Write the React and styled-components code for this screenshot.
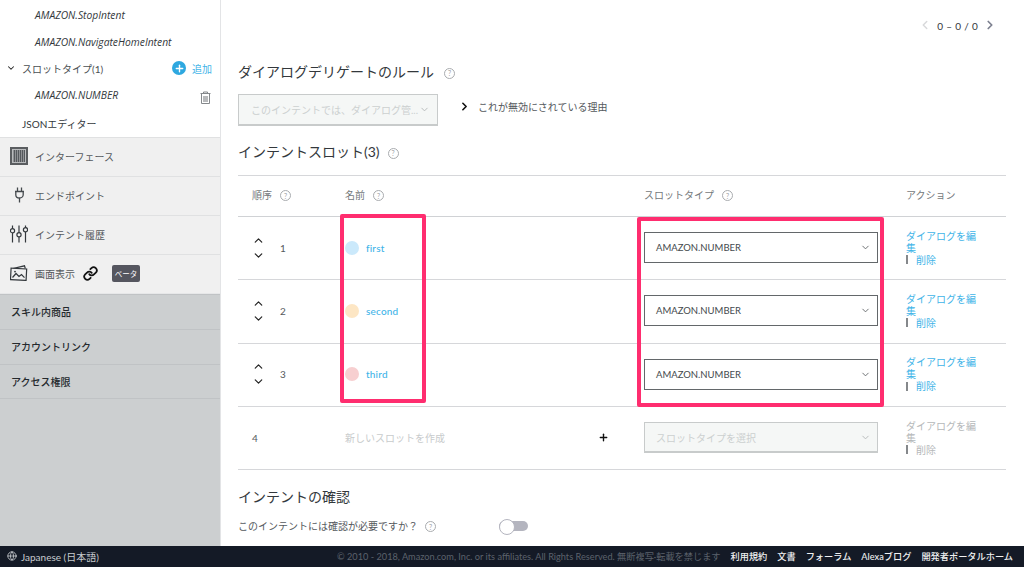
import React from 'react';
import styled, { createGlobalStyle } from 'styled-components';
import { ChevronDown, ChevronUp, ChevronRight, ChevronLeft, Plus, Link, Globe } from 'lucide-react';

const GlobalStyle = createGlobalStyle`
    html, body, #root {
        margin: 0;
        height: 100%;
    }
    body {
        font-family: "Lato", "Noto Sans CJK JP", sans-serif;
        color: #44494d;
        background: #fff;
        overflow: hidden;
    }
    * {
        box-sizing: border-box;
    }
`;

const Page = styled.div`
    width: 1024px;
    height: 567px;
    display: flex;
    flex-direction: column;
`;

const Body = styled.div`
    flex: 1;
    min-height: 0;
    display: flex;
`;

const Sidebar = styled.aside`
    width: 221px;
    flex: none;
    display: flex;
    flex-direction: column;
    background: #cccfd0;
    border-right: 1px solid #e3e4e6;
`;

const TreeBlock = styled.div`
    background: #fff;
    height: 137px;
    padding-top: 2px;
`;

const TreeRow = styled.div`
    height: 26.6px;
    display: flex;
    align-items: center;
    padding-left: ${p => p.$indent}px;
    padding-right: 8px;
    font-size: 10px;
    color: #4a4f53;
`;

const IntentName = styled.span`
    font-family: "Open Sans", sans-serif;
    font-style: italic;
    font-size: 10.3px;
    color: #33383c;
`;

const AddLabel = styled.span`
    display: flex;
    align-items: center;
    gap: 6px;
    margin-left: auto;
    color: #3fb4e8;
    font-size: 10px;
`;

const AddDot = styled.span`
    width: 14px;
    height: 14px;
    border-radius: 50%;
    background: #2ea8e0;
    color: #fff;
    display: flex;
    align-items: center;
    justify-content: center;
`;

const TrashWrap = styled.span`
    margin-left: auto;
    margin-right: 1px;
    display: flex;
    padding-top: 4px;
`;

const JsonRow = styled(TreeRow)`
    margin-top: 2px;
    color: #33383c;
`;

const NavList = styled.div`
    border-bottom: 1px solid #e6e7e8;
`;

const NavItem = styled.div`
    height: 39px;
    padding-bottom: 2px;
    display: flex;
    align-items: center;
    background: #f0f0f0;
    border-top: 1px solid #e0e1e2;
    font-size: 10px;
    color: #55595d;
`;

const NavIcon = styled.span`
    width: 35px;
    padding-left: 10px;
    flex: none;
    display: flex;
    color: #33383c;
`;

const GridIcon = styled.span`
    width: 18px;
    height: 18px;
    border: 2px solid #5a5d60;
    outline: 1px solid #b9bbbd;
    outline-offset: -3px;
    background:
        repeating-linear-gradient(90deg, #55595d 0 1px, #8f9194 1px 2px),
        #777;
`;

const BetaBadge = styled.span`
    margin-left: 14px;
    width: 28px;
    height: 17px;
    border-radius: 2px;
    background: #55565f;
    color: #fff;
    font-size: 7.5px;
    display: flex;
    align-items: center;
    justify-content: center;
`;

const LinkWrap = styled.span`
    margin-left: 8px;
    display: flex;
    color: #111;
`;

const GrayItem = styled.div`
    height: 35px;
    padding: 0 0 1px 11px;
    display: flex;
    align-items: center;
    border-top: 1px solid #c0c3c5;
    font-size: 10px;
    font-weight: 500;
    color: #24292d;
    &:last-of-type {
        border-bottom: 1px solid #c0c3c5;
    }
`;

const Main = styled.main`
    flex: 1;
    min-width: 0;
    padding: 0 18px 0 17px;
    overflow: hidden;
`;

const Pager = styled.div`
    height: 62px;
    padding: 18px 9px 0 0;
    display: flex;
    justify-content: flex-end;
    align-items: flex-start;
    gap: 5px;
    font-size: 10px;
    letter-spacing: 0.3px;
    color: #33383c;
    line-height: 16px;
`;

const Heading = styled.h2`
    margin: 0;
    font-size: 14px;
    font-weight: 400;
    line-height: 20px;
    color: #33383c;
    display: flex;
    align-items: center;
    gap: ${p => p.$gap || 5}px;
`;

const HelpMark = styled.span`
    width: 11px;
    height: 11px;
    flex: none;
    border: 1px solid #a9acaf;
    border-radius: 50%;
    color: #a0a3a6;
    font-size: 7px;
    display: inline-flex;
    align-items: center;
    justify-content: center;
    margin-top: 2px;
`;

const DelegateRow = styled.div`
    margin-top: 12px;
    height: 31px;
    display: flex;
    align-items: center;
`;

const SelectBox = styled.div`
    width: ${p => p.$width}px;
    height: ${p => p.$height || 32}px;
    flex: none;
    padding: 0 ${p => (p.$tight ? 7 : 6)}px 0 ${p => (p.$tight ? 12 : 11)}px;
    display: flex;
    align-items: center;
    justify-content: space-between;
    white-space: nowrap;
    font-size: ${p => (p.$mono ? 9.5 : 10)}px;
    border: 1px solid ${p => (p.$disabled ? '#c8cbcb' : '#63676a')};
    border-bottom-width: ${p => (p.$disabled ? 2 : 1)}px;
    background: ${p => (p.$disabled ? '#f5f7f6' : '#fff')};
    color: ${p => (p.$disabled ? '#ccd0d0' : '#44494d')};
`;

const SelectChevron = styled.span`
    display: flex;
    color: ${p => (p.$disabled ? '#b4b8b8' : '#63676a')};
`;

const Reason = styled.div`
    margin-left: 20px;
    padding-bottom: 6px;
    display: flex;
    align-items: center;
    gap: 7px;
    font-size: 10px;
    color: #55595d;
`;

const SlotHeading = styled(Heading)`
    margin-top: 17px;
`;

const Table = styled.div`
    position: relative;
    margin-top: 13px;
    border-top: 1px solid #d6d7da;
`;

const columns = '107px 299px 262px 1fr';

const HeaderRow = styled.div`
    display: grid;
    grid-template-columns: ${columns};
    height: 41px;
    padding-bottom: 3px;
    align-items: center;
    font-size: 10px;
    color: #74787b;
    border-bottom: 1px solid #d0d2d5;
`;

const HeaderCell = styled.div`
    display: flex;
    align-items: center;
    gap: 8px;
    padding-left: ${p => p.$pad || 0}px;
`;

const SlotRow = styled.div`
    display: grid;
    grid-template-columns: ${columns};
    height: 63.3px;
    padding-bottom: 1px;
    align-items: center;
    font-size: 10px;
    border-bottom: 1px solid #d6d7da;
`;

const OrderCell = styled.div`
    display: flex;
    align-items: center;
    padding-left: 14px;
    gap: 15px;
    color: #55595d;
`;

const Arrows = styled.div`
    width: 13px;
    display: flex;
    flex-direction: column;
    align-items: center;
    gap: 2px;
    color: #222;
`;

const NameCell = styled.div`
    display: flex;
    align-items: center;
    gap: 7px;
`;

const Dot = styled.span`
    width: 14px;
    height: 14px;
    border-radius: 50%;
    background: ${p => p.$color};
`;

const SlotName = styled.span`
    color: #3fb4e8;
    font-size: 10px;
    font-weight: 500;
    letter-spacing: 0.2px;
`;

const NewSlotCell = styled.div`
    display: flex;
    align-items: center;
    justify-content: space-between;
    padding-right: 35px;
    color: #c8cbcc;
`;

const PlusWrap = styled.span`
    display: flex;
    color: #111;
`;

const ActionCell = styled.div`
    width: 74px;
    font-size: 10px;
    line-height: 12px;
    color: ${p => (p.$disabled ? '#b5b8ba' : '#3fb4e8')};
`;

const DeleteLine = styled.div`
    display: flex;
    align-items: center;
`;

const Divider = styled.span`
    width: 2px;
    height: 9px;
    background: #85888b;
    margin-right: 8px;
`;

const Highlight = styled.div`
    position: absolute;
    top: ${p => p.$top}px;
    left: ${p => p.$left}px;
    width: ${p => p.$width}px;
    height: ${p => p.$height}px;
    border: 4px solid #ff2d6f;
    border-radius: 2px;
    pointer-events: none;
`;

const ConfirmHeading = styled(Heading)`
    margin-top: 17px;
`;

const ConfirmRow = styled.div`
    margin-top: 11px;
    display: flex;
    align-items: center;
    font-size: 10px;
    color: #55595d;
    gap: 7px;
`;

const Toggle = styled.span`
    position: relative;
    margin-left: 56px;
    width: 29px;
    height: 10px;
    border-radius: 5px;
    background: #b4b5bf;
    &::before {
        content: "";
        position: absolute;
        left: 0;
        top: -2px;
        width: 14px;
        height: 14px;
        border-radius: 50%;
        background: #fff;
        border: 1px solid #b4b5bf;
    }
`;

const Footer = styled.footer`
    height: 21px;
    flex: none;
    display: flex;
    align-items: center;
    padding: 0 11px 1px 7px;
    background: #141a26;
    font-size: 10px;
    color: #c8cbcf;
`;

const Language = styled.span`
    display: flex;
    align-items: center;
    gap: 4px;
`;

const Copyright = styled.span`
    margin-left: auto;
    color: #5c626c;
    font-size: 9.2px;
`;

const FooterLinks = styled.span`
    display: flex;
    gap: 10px;
    margin-left: 10px;
    color: #f0f1f2;
    font-size: 9.2px;
    font-weight: 500;
`;

const TrashIcon = () => (
    <svg width="11" height="13" viewBox="0 0 11 13" fill="none" stroke="#85898c">
        <path d="M0.5 2.5h10M3.5 2.5V1h4v1.5" />
        <path d="M1.5 2.5v10h8v-10" />
        <rect x="3" y="5" width="5" height="6" fill="#b8babc" stroke="none" />
    </svg>
);

const PlugIcon = () => (
    <svg width="11" height="16" viewBox="0 0 11 16" fill="none" stroke="#44494d" strokeWidth="1.3" style={{ marginLeft: 4 }}>
        <path d="M3.5 0.5v3.5M7.5 0.5v3.5" />
        <path d="M1 4.5h9M1.8 4.5v3.2c0 2 1.7 3.3 3.7 3.3s3.7-1.3 3.7-3.3V4.5" />
        <path d="M5.5 11v4.5" />
    </svg>
);

const SlidersIcon = () => (
    <svg width="18" height="18" viewBox="0 0 18 18" fill="none" stroke="#33383c" strokeWidth="1.2">
        <path d="M2.5 0.5v3M2.5 8v9.5M9 0.5v7M9 12v5.5M15.5 0.5v2M15.5 7v10.5" />
        <circle cx="2.5" cy="5.7" r="2.1" />
        <circle cx="9" cy="9.8" r="2.1" />
        <circle cx="15.5" cy="4.7" r="2.1" />
    </svg>
);

const PicturesIcon = () => (
    <svg width="18" height="16" viewBox="0 0 18 16" fill="none" stroke="#33383c" strokeWidth="1.2">
        <path d="M3 3.5L14.5 0.8l0.8 2.7" />
        <rect x="0.8" y="3.6" width="15.6" height="11.4" transform="rotate(3 8 9)" fill="#f0f0f0" />
        <path d="M2.5 12.5l3.5-4 3 3 2.5-2 3 3.2" />
        <circle cx="5" cy="6.6" r="0.9" fill="#33383c" stroke="none" />
    </svg>
);

const slots = [
    { order: 1, name: 'first', color: '#cbe9fb' },
    { order: 2, name: 'second', color: '#fde6c4' },
    { order: 3, name: 'third', color: '#f7cfd0' },
];

const App = () => {
    return (
        <Page>
            <GlobalStyle />
            <Body>
                <Sidebar>
                    <TreeBlock>
                        <TreeRow $indent={35}><IntentName>AMAZON.StopIntent</IntentName></TreeRow>
                        <TreeRow $indent={35}><IntentName>AMAZON.NavigateHomeIntent</IntentName></TreeRow>
                        <TreeRow $indent={6}>
                            <ChevronDown size={10} strokeWidth={2.5} color="#222" style={{ marginRight: 6 }} />
                            スロットタイプ(1)
                            <AddLabel>
                                <AddDot><Plus size={11} strokeWidth={3} /></AddDot>
                                追加
                            </AddLabel>
                        </TreeRow>
                        <TreeRow $indent={35}>
                            <IntentName>AMAZON.NUMBER</IntentName>
                            <TrashWrap><TrashIcon /></TrashWrap>
                        </TreeRow>
                        <JsonRow $indent={22}>JSONエディター</JsonRow>
                    </TreeBlock>
                    <NavList>
                        <NavItem>
                            <NavIcon><GridIcon /></NavIcon>
                            インターフェース
                        </NavItem>
                        <NavItem>
                            <NavIcon><PlugIcon /></NavIcon>
                            エンドポイント
                        </NavItem>
                        <NavItem>
                            <NavIcon><SlidersIcon /></NavIcon>
                            インテント履歴
                        </NavItem>
                        <NavItem>
                            <NavIcon><PicturesIcon /></NavIcon>
                            画面表示
                            <LinkWrap><Link size={15} strokeWidth={2.8} /></LinkWrap>
                            <BetaBadge>ベータ</BetaBadge>
                        </NavItem>
                    </NavList>
                    <GrayItem>スキル内商品</GrayItem>
                    <GrayItem>アカウントリンク</GrayItem>
                    <GrayItem>アクセス権限</GrayItem>
                </Sidebar>
                <Main>
                    <Pager>
                        <ChevronLeft size={14} strokeWidth={2.5} color="#d8d9db" />
                        0 – 0 / 0
                        <ChevronRight size={14} strokeWidth={3} color="#7d8190" />
                    </Pager>
                    <Heading $gap={10}>ダイアログデリゲートのルール <HelpMark>?</HelpMark></Heading>
                    <DelegateRow>
                        <SelectBox $width={200} $disabled $tight>
                            このインテントでは、ダイアログ管...
                            <SelectChevron $disabled><ChevronDown size={11} /></SelectChevron>
                        </SelectBox>
                        <Reason>
                            <ChevronRight size={13} strokeWidth={3} color="#111" />
                            これが無効にされている理由
                        </Reason>
                    </DelegateRow>
                    <SlotHeading $gap={8}>インテントスロット(3) <HelpMark>?</HelpMark></SlotHeading>
                    <Table>
                        <HeaderRow>
                            <HeaderCell $pad={14}>順序 <HelpMark>?</HelpMark></HeaderCell>
                            <HeaderCell>名前 <HelpMark>?</HelpMark></HeaderCell>
                            <HeaderCell>スロットタイプ <HelpMark>?</HelpMark></HeaderCell>
                            <HeaderCell>アクション</HeaderCell>
                        </HeaderRow>
                        {slots.map(slot => (
                            <SlotRow key={slot.order}>
                                <OrderCell>
                                    <Arrows>
                                        <ChevronUp size={13} strokeWidth={2.2} />
                                        <ChevronDown size={13} strokeWidth={2.2} />
                                    </Arrows>
                                    {slot.order}
                                </OrderCell>
                                <NameCell>
                                    <Dot $color={slot.color} />
                                    <SlotName>{slot.name}</SlotName>
                                </NameCell>
                                <div>
                                    <SelectBox $width={234} $height={31} $mono>
                                        AMAZON.NUMBER
                                        <SelectChevron><ChevronDown size={11} /></SelectChevron>
                                    </SelectBox>
                                </div>
                                <ActionCell>
                                    ダイアログを編集
                                    <DeleteLine><Divider />削除</DeleteLine>
                                </ActionCell>
                            </SlotRow>
                        ))}
                        <SlotRow>
                            <OrderCell>4</OrderCell>
                            <NewSlotCell>
                                新しいスロットを作成
                                <PlusWrap><Plus size={11} strokeWidth={3} /></PlusWrap>
                            </NewSlotCell>
                            <div>
                                <SelectBox $width={234} $height={31} $disabled>
                                    スロットタイプを選択
                                    <SelectChevron $disabled><ChevronDown size={11} /></SelectChevron>
                                </SelectBox>
                            </div>
                            <ActionCell $disabled>
                                ダイアログを編集
                                <DeleteLine><Divider />削除</DeleteLine>
                            </ActionCell>
                        </SlotRow>
                        <Highlight $top={38} $left={102} $width={86} $height={189} />
                        <Highlight $top={41} $left={399} $width={247} $height={190} />
                    </Table>
                    <ConfirmHeading>インテントの確認</ConfirmHeading>
                    <ConfirmRow>
                        このインテントには確認が必要ですか？
                        <HelpMark>?</HelpMark>
                        <Toggle />
                    </ConfirmRow>
                </Main>
            </Body>
            <Footer>
                <Language><Globe size={10} />Japanese (日本語)</Language>
                <Copyright>© 2010 - 2018, Amazon.com, Inc. or its affiliates. All Rights Reserved. 無断複写·転載を禁じます</Copyright>
                <FooterLinks>
                    <span>利用規約</span>
                    <span>文書</span>
                    <span>フォーラム</span>
                    <span>Alexaブログ</span>
                    <span>開発者ポータルホーム</span>
                </FooterLinks>
            </Footer>
        </Page>
    );
};

export default App;
